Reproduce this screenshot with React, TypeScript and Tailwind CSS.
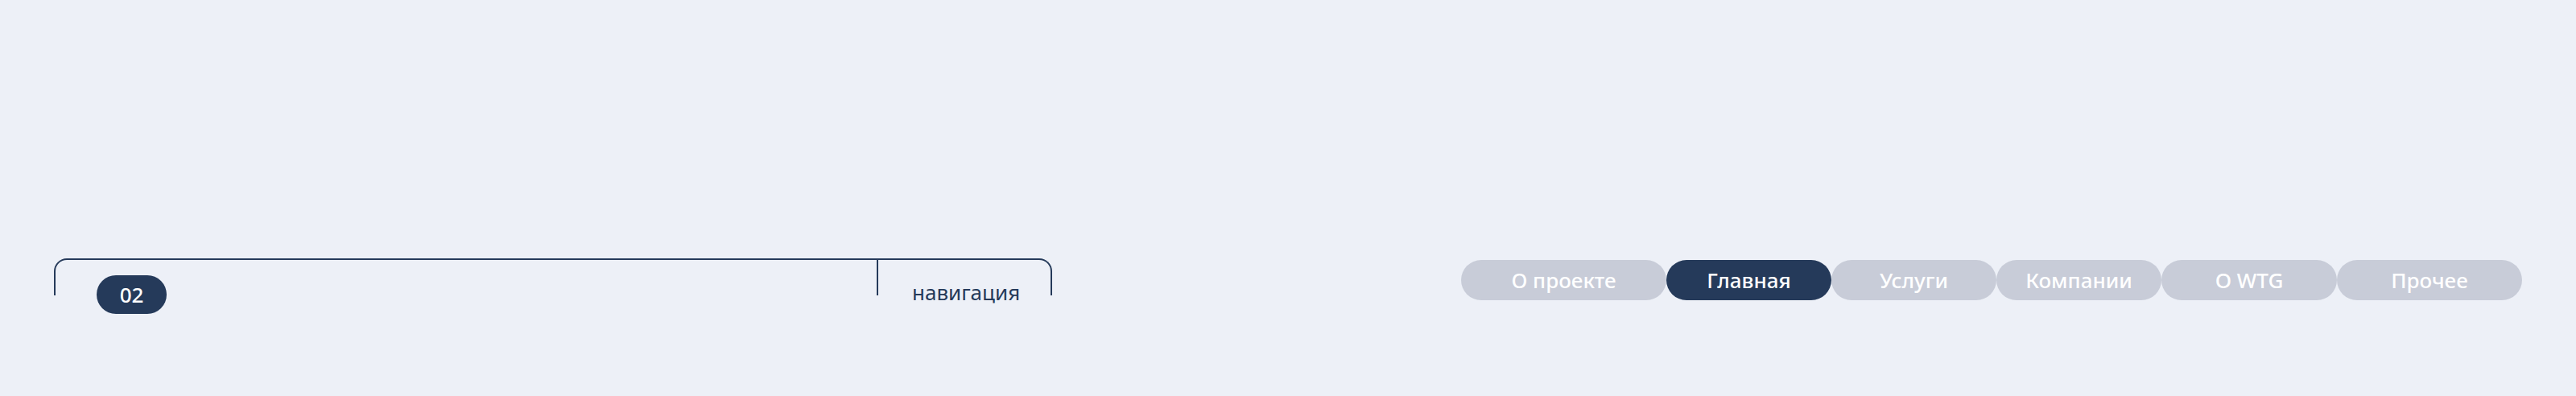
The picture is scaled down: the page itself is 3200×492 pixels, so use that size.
const NAV_ITEMS = [
  { label: "О проекте", width: "w-[255px]" },
  { label: "Главная", width: "w-[205px]", active: true },
  { label: "Услуги", width: "w-[205px]" },
  { label: "Компании", width: "w-[205px]" },
  { label: "O WTG", width: "w-[218px]" },
  { label: "Прочее", width: "w-[230px]" },
];

export default function App() {
  return (
    <div
      className="w-[3200px] h-[492px] bg-[#edf0f7] px-[67px] pt-[321px] flex justify-between items-start text-[#253a5a]"
      style={{ fontFamily: '"Noto Sans", "Open Sans", sans-serif' }}
    >
      {/* section bracket */}
      <div className="w-[1240px] h-[46px] border-t-2 border-x-2 border-[#253a5a] rounded-t-2xl flex">
        <div className="w-[1020px] pl-[51px] pt-[19px]">
          <span className="inline-flex items-center justify-center w-[87px] h-[48px] rounded-full bg-[#253a5a] text-white text-[26px] font-medium leading-none">
            02
          </span>
        </div>
        <div className="border-l-2 border-[#253a5a] flex-1 pl-[42px] pt-[22px]">
          <span className="text-[26px] leading-[36px] whitespace-nowrap">навигация</span>
        </div>
      </div>

      {/* nav pills */}
      <nav className="flex mt-[2px]">
        {NAV_ITEMS.map((item) => (
          <div
            key={item.label}
            className={`${item.width} h-[50px] rounded-full flex items-center justify-center text-[26px] font-medium text-white whitespace-nowrap ${
              item.active ? "bg-[#253a5a]" : "bg-[#c8ccd8]"
            }`}
          >
            {item.label}
          </div>
        ))}
      </nav>
    </div>
  );
}
